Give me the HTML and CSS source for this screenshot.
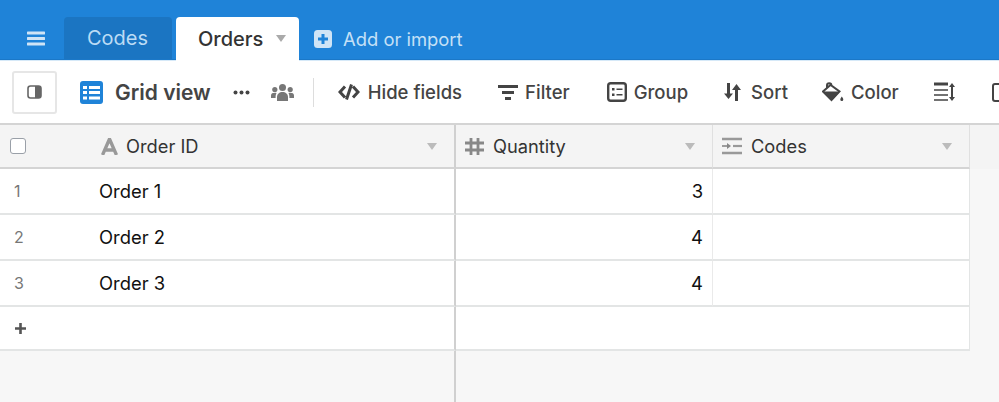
FILE: index.html
```html
<!DOCTYPE html>
<html lang="en">
<head>
    <meta charset="UTF-8">
    <meta name="viewport" content="width=device-width, initial-scale=1.0">
    <title>Orders</title>
    <link rel="stylesheet" href="styles.css">
</head>
<body>
    <div class="tabbar">
        <svg class="menu-icon" width="18" height="15" viewBox="0 0 18 15"><path d="M1 2h16M1 7.500h16M1 13h16" stroke="#cfe4f6" stroke-width="3" stroke-linecap="round"/></svg>
        <div class="tab tab-dark">Codes</div>
        <div class="tab tab-active">Orders<span class="tab-caret"></span></div>
        <div class="add-tab">
            <svg width="18" height="18" viewBox="0 0 18 18"><rect width="18" height="18" rx="3.5" fill="#cfe4f6"/><path d="M9 4v10M4 9h10" stroke="#1f83d8" stroke-width="3"/></svg>
            <span>Add or import</span>
        </div>
    </div>

    <div class="toolbar">
        <div class="sidebar-btn">
            <svg width="15" height="14" viewBox="0 0 15 14"><rect x="1" y="1" width="13" height="12" rx="2.5" fill="#fff" stroke="#666" stroke-width="1.6"/><path d="M8 1h3.500A2.500 2.500 0 0 1 14 3.500v7a2.500 2.500 0 0 1-2.500 2.500H8z" fill="#666"/></svg>
        </div>
        <svg class="grid-icon" width="23" height="23" viewBox="0 0 23 23"><rect width="23" height="23" rx="3" fill="#1f83d8"/><path d="M3 5h4v3H3zM9 5h11v3H9zM3 10h4v3H3zM9 10h11v3H9zM3 15.500h4v3H3zM9 15.500h11v3H9z" fill="#fff"/></svg>
        <div class="view-name">Grid view</div>
        <svg class="dots" width="17" height="5" viewBox="0 0 17 5"><circle cx="2.500" cy="2.500" r="2" fill="#444"/><circle cx="8.500" cy="2.500" r="2" fill="#444"/><circle cx="14.500" cy="2.500" r="2" fill="#444"/></svg>
        <svg class="people" width="23" height="17" viewBox="0 0 23 17"><g fill="#777"><circle cx="11.500" cy="3.500" r="3.500"/><circle cx="3.800" cy="5.500" r="2.600"/><circle cx="19.200" cy="5.500" r="2.600"/><path d="M6 17v-4c0-3 2.500-5 5.500-5s5.500 2 5.500 5v4z"/><path d="M0 14v-2.500C0 9.500 1.600 8.800 3.800 8.800c.8 0 1.300.1 1.700.3-.6 1-.9 2.200-.9 3.400V14zM23 14v-2.500c0-2-1.600-2.700-3.800-2.700-.8 0-1.300.1-1.700.3.600 1 .9 2.200.9 3.400V14z"/></g></svg>
        <div class="divider"></div>
        <div class="tool tool-hide">
            <svg width="22" height="16" viewBox="0 0 22 16"><path d="M7 2.500 2 8l5 5.500M15 2.500 20 8l-5 5.500M13.500 .5 8.500 15.500" fill="none" stroke="#444" stroke-width="3"/></svg>
            <span>Hide fields</span>
        </div>
        <div class="tool tool-filter">
            <svg width="20" height="15" viewBox="0 0 20 15"><path d="M0 1.500h20M4 7.500h12M7 13.500h6" stroke="#444" stroke-width="2.800"/></svg>
            <span>Filter</span>
        </div>
        <div class="tool tool-group">
            <svg width="20" height="20" viewBox="0 0 20 20"><rect x="1.200" y="1.200" width="17.600" height="17.600" rx="2.500" fill="none" stroke="#444" stroke-width="2.400"/><path d="M5 6h2.500v2.500H5zM9.500 6.500h6V8h-6zM5 11.500h2.500V14H5zM9.500 12h6v1.500h-6z" fill="#444"/></svg>
            <span>Group</span>
        </div>
        <div class="tool tool-sort">
            <svg width="17" height="18" viewBox="0 0 17 18"><path d="M4.500 0v12M12.500 18V5" stroke="#444" stroke-width="3"/><path d="M0 10.500h9L4.500 16zM8 7h9l-4.500-6z" fill="#444"/></svg>
            <span>Sort</span>
        </div>
        <div class="tool tool-color">
            <svg width="22" height="20" viewBox="0 0 22 20"><path d="M5 6V3.500a2.200 2.200 0 0 1 4.400 0L17.500 9.500 9.500 18 1 9.500 9 2.500" fill="none" stroke="#444" stroke-width="2"/><path d="M1 9.500h17L9.500 18.500z" fill="#444"/><path d="M19.800 14.500c1 1.500 1.500 2.200 1.500 3a1.500 1.500 0 0 1-3 0c0-.8.500-1.500 1.500-3z" fill="#444"/></svg>
            <span>Color</span>
        </div>
        <svg class="row-height" width="21" height="20" viewBox="0 0 21 20"><path d="M0 2h14" stroke="#444" stroke-width="3"/><path d="M0 8h14M0 13h14M0 18h14" stroke="#444" stroke-width="1.600"/><path d="M18 3v14" stroke="#444" stroke-width="2"/><path d="M15 5l3-4 3 4zM15 15l3 4 3-4z" fill="#444"/></svg>
        <div class="cut-icon"></div>
    </div>

    <div class="grid">
        <div class="grid-row grid-head">
            <div class="pane-left head-cell">
                <span class="checkbox"></span>
                <svg class="type-a" width="17" height="17" viewBox="0 0 17 17"><path d="M1.500 17 8.500 1l7 16M4 12h9" fill="none" stroke="#999" stroke-width="3.400"/></svg>
                <span class="head-label head-label-first">Order ID</span>
                <span class="caret"></span>
            </div>
            <div class="col head-cell">
                <svg width="19" height="19" viewBox="0 0 19 19"><path d="M6 1v17M13 1v17M0 6h19M0 13h19" stroke="#888" stroke-width="2.800"/></svg>
                <span class="head-label">Quantity</span>
                <span class="caret"></span>
            </div>
            <div class="col head-cell">
                <svg width="20" height="18" viewBox="0 0 20 18"><path d="M0 2h20M0 16h20" stroke="#999" stroke-width="2.600"/><path d="M11 9h9" stroke="#999" stroke-width="2.200"/><path d="M0 9h5" stroke="#888" stroke-width="1.600"/><path d="M5 6l4 3-4 3z" fill="#888"/></svg>
                <span class="head-label">Codes</span>
                <span class="caret"></span>
            </div>
        </div>

        <div class="grid-row">
            <div class="pane-left"><span class="row-num">1</span><span class="order">Order 1</span></div>
            <div class="col num">3</div>
            <div class="col"></div>
        </div>
        <div class="grid-row">
            <div class="pane-left"><span class="row-num">2</span><span class="order">Order 2</span></div>
            <div class="col num">4</div>
            <div class="col"></div>
        </div>
        <div class="grid-row">
            <div class="pane-left"><span class="row-num">3</span><span class="order">Order 3</span></div>
            <div class="col num">4</div>
            <div class="col"></div>
        </div>
        <div class="grid-row add-row">
            <div class="pane-left">
                <svg class="plus" width="13" height="13" viewBox="0 0 13 13"><path d="M6.500 1v11M1 6.500h11" stroke="#555" stroke-width="2.600"/></svg>
            </div>
            <div class="add-rest"></div>
        </div>
        <div class="grid-empty"><div class="empty-left"></div></div>
    </div>
</body>
</html>
```
FILE: styles.css
```css
* {
    box-sizing: border-box;
}
html, body {
    height: 100%;
}
body {
    margin: 0;
    font-family: Inter, "Liberation Sans", sans-serif;
    color: #333;
    background-color: #f7f7f7;
    overflow: hidden;
    display: flex;
    flex-direction: column;
}
.tabbar {
    height: 60px;
    flex: none;
    background-color: #1f83d8;
    display: flex;
    align-items: flex-end;
    padding-left: 27px;
    border-bottom: 1px solid #1b78c8;
}
.menu-icon {
    margin-bottom: 13px;
}
.tab {
    height: 42px;
    display: flex;
    align-items: center;
    font-size: 20px;
    border-radius: 4px 4px 0 0;
}
.tab-dark {
    width: 108px;
    margin-left: 19px;
    padding-left: 23px;
    background-color: #1b75c2;
    color: #bcdcf5;
}
.tab-active {
    width: 123px;
    height: 44px;
    margin-left: 4px;
    margin-bottom: -2px;
    padding-left: 22px;
    background-color: #fff;
    color: #333;
    font-weight: 500;
    position: relative;
}
.tab-caret {
    width: 0;
    height: 0;
    margin-left: 13px;
    margin-bottom: 2px;
    border-left: 5px solid transparent;
    border-right: 5px solid transparent;
    border-top: 7px solid #aaa;
}
.add-tab {
    height: 42px;
    display: flex;
    align-items: center;
    gap: 11px;
    margin-left: 15px;
    padding-top: 1px;
    font-size: 18.400px;
    color: #c5e0f6;
}
.toolbar {
    height: 65px;
    flex: none;
    background-color: #fff;
    border-top: 1px solid #d6e9f8;
    border-bottom: 2px solid #d4d4d4;
    display: flex;
    align-items: center;
    padding-left: 12px;
    overflow: hidden;
}
.sidebar-btn {
    width: 45px;
    height: 43px;
    flex: none;
    border: 2.500px solid #e6e6e6;
    border-radius: 3px;
    display: flex;
    align-items: center;
    justify-content: center;
}
.grid-icon {
    flex: none;
    margin-left: 23px;
}
.view-name {
    flex: none;
    margin-left: 12px;
    font-size: 21px;
    font-weight: 600;
    color: #444;
    white-space: nowrap;
}
.dots {
    flex: none;
    margin-left: 22px;
}
.people {
    flex: none;
    margin-left: 21px;
}
.divider {
    width: 1px;
    height: 29px;
    flex: none;
    margin-left: 19px;
    background-color: #ddd;
}
.tool {
    flex: none;
    display: flex;
    align-items: center;
    gap: 8px;
    font-size: 18.500px;
    font-weight: 500;
    color: #444;
    white-space: nowrap;
}
.tool-hide {
    margin-left: 24px;
}
.tool-filter {
    margin-left: 36px;
    gap: 7px;
}
.tool-group {
    margin-left: 37px;
    gap: 7px;
}
.tool-sort {
    margin-left: 36px;
    gap: 10px;
}
.tool-color {
    margin-left: 34px;
    gap: 7px;
}
.row-height {
    flex: none;
    margin-left: 35px;
}
.cut-icon {
    width: 20px;
    height: 19px;
    flex: none;
    margin-left: 37px;
    border: 2.500px solid #444;
    border-radius: 3px;
}
.grid {
    flex: 1;
    display: flex;
    flex-direction: column;
}
.grid-row {
    height: 46px;
    flex: none;
    display: flex;
    font-size: 18.400px;
}
.pane-left {
    width: 456px;
    flex: none;
    display: flex;
    align-items: center;
    background-color: #fff;
    border-right: 2px solid #d0d0d0;
    border-bottom: 2px solid #e3e5e5;
}
.col {
    width: 257px;
    flex: none;
    background-color: #fff;
    border-right: 1px solid #eaeaea;
    border-bottom: 2px solid #e3e5e5;
}
.col:last-child {
    border-right: 1px solid #e3e5e5;
}
.grid-head {
    height: 44px;
    background-color: #f4f4f4;
}
.head-cell {
    display: flex;
    align-items: center;
    background-color: #f4f4f4;
    border-bottom: 2px solid #d4d4d4;
    padding-right: 17px;
}
.col.head-cell {
    padding-left: 9px;
    border-right: 1px solid #e0e0e0;
}
.head-cell svg {
    flex: none;
}
.head-label {
    flex: 1;
    margin-left: 9px;
    font-size: 18.300px;
    color: #333;
}
.head-label-first {
    margin-left: 8px;
}
.checkbox {
    width: 16px;
    height: 16px;
    flex: none;
    margin-left: 10px;
    border: 1.500px solid #9aa0a8;
    border-radius: 3px;
    background-color: #fff;
}
.type-a {
    margin-left: 75px;
}
.caret {
    width: 0;
    height: 0;
    flex: none;
    border-left: 5px solid transparent;
    border-right: 5px solid transparent;
    border-top: 7px solid #bbb;
}
.row-num {
    width: 99px;
    flex: none;
    padding-left: 14px;
    font-size: 16px;
    color: #777;
}
.order {
    color: #111;
}
.num {
    display: flex;
    align-items: center;
    justify-content: flex-end;
    padding-right: 9px;
    color: #111;
}
.add-row {
    height: 44px;
}
.plus {
    margin-left: 14px;
}
.add-rest {
    width: 514px;
    flex: none;
    background-color: #fff;
    border-right: 1px solid #e3e5e5;
    border-bottom: 2px solid #e3e5e5;
}
.grid-empty {
    flex: 1;
    display: flex;
}
.empty-left {
    width: 456px;
    border-right: 2px solid #d0d0d0;
}
```
